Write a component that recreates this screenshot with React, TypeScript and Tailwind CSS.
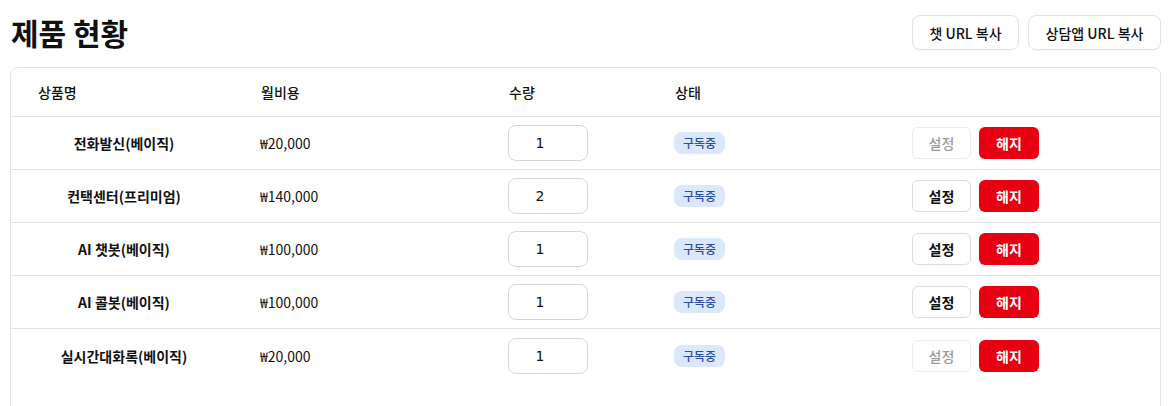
const products = [
  { name: '전화발신(베이직)', price: '₩20,000', qty: 1, canSet: false },
  { name: '컨택센터(프리미엄)', price: '₩140,000', qty: 2, canSet: true },
  { name: 'AI 챗봇(베이직)', price: '₩100,000', qty: 1, canSet: true },
  { name: 'AI 콜봇(베이직)', price: '₩100,000', qty: 1, canSet: true },
  { name: '실시간대화록(베이직)', price: '₩20,000', qty: 1, canSet: false },
];

const cols = 'grid grid-cols-[226px_248px_166px_238px_1fr] items-center';

export default function App() {
  return (
    <div
      className="min-h-screen bg-white pt-[15px] pl-[10px] pr-[11px] text-[#111]"
      style={{ fontFamily: '"Noto Sans CJK KR", "Noto Sans", sans-serif' }}
    >
      {/* Title bar */}
      <div className="flex items-center justify-between">
        <h1 className="pl-px text-[30px] font-bold leading-[35px]">제품 현황</h1>
        <div className="flex gap-[9px]">
          <button className="h-[35px] w-[107px] rounded-lg border border-[#e2e2e2] bg-white text-sm font-medium shadow-[0_1px_1px_rgba(0,0,0,0.03)]">
            챗 URL 복사
          </button>
          <button className="h-[35px] w-[133px] rounded-lg border border-[#e2e2e2] bg-white text-sm font-medium shadow-[0_1px_1px_rgba(0,0,0,0.03)]">
            상담앱 URL 복사
          </button>
        </div>
      </div>

      {/* Product table */}
      <div className="mt-[17px] h-[360px] rounded-lg border border-[#e5e5e5] bg-white">
        <div className={`${cols} h-[49px] border-b border-[#e5e5e5] text-sm font-medium`}>
          <div className="pl-[27px]">상품명</div>
          <div className="pl-[24px]">월비용</div>
          <div className="pl-[24px]">수량</div>
          <div className="pl-[24px]">상태</div>
          <div />
        </div>
        {products.map((p, i) => (
          <div
            key={p.name}
            className={`${cols} h-[53px] text-sm ${i < products.length - 1 ? 'border-b border-[#e5e5e5]' : ''}`}
          >
            <div className="text-center font-semibold">{p.name}</div>
            <div className="pl-[23px]">{p.price}</div>
            <div className="pl-[23px]">
              <input
                readOnly
                value={p.qty}
                className="h-[36px] w-[80px] rounded-lg border border-[#d6d6d6] bg-white pr-4 text-center text-sm outline-none"
                style={{ fontFamily: '"DejaVu Sans", sans-serif' }}
              />
            </div>
            <div className="pl-[23px]">
              <span className="inline-flex h-[22px] w-[51px] items-center justify-center rounded-lg bg-[#dbe7fb] text-xs font-medium text-[#2a4f9e]">
                구독중
              </span>
            </div>
            <div className="flex gap-[8px] pl-[23px]">
              <button
                className={
                  p.canSet
                    ? 'h-[32px] w-[59px] rounded-md border border-[#dcdcdc] bg-white text-sm font-semibold text-[#111]'
                    : 'h-[32px] w-[59px] rounded-md border border-[#ececec] bg-white text-sm font-medium text-[#9a9a9a]'
                }
              >
                설정
              </button>
              <button className="h-[32px] w-[60px] rounded-md bg-[#e60012] text-sm font-bold text-white">
                해지
              </button>
            </div>
          </div>
        ))}
      </div>
    </div>
  );
}
